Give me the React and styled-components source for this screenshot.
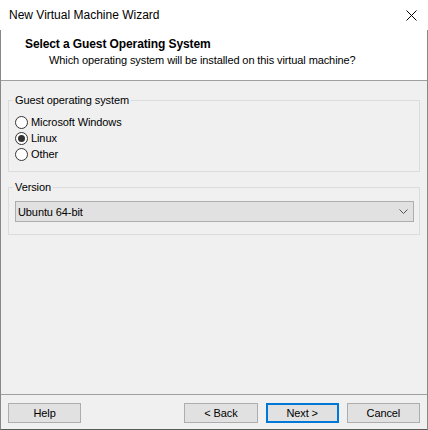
import React, { useState } from "react";
import styled, { createGlobalStyle } from "styled-components";

const GlobalStyle = createGlobalStyle`
  html, body {
    margin: 0;
    padding: 0;
    background: #ffffff;
  }
  body {
    font-family: "Liberation Sans", Arial, sans-serif;
    font-size: 11px;
    letter-spacing: -0.1px;
    color: #000000;
  }
`;

const Window = styled.div`
  width: 428px;
  height: 430px;
  display: flex;
  flex-direction: column;
  box-sizing: border-box;
  background: #f0f0f0;
`;

const TitleBar = styled.div`
  height: 30px;
  flex: none;
  display: flex;
  align-items: center;
  justify-content: space-between;
  background: #ffffff;
  padding: 0 11px 0 9px;
`;

const TitleText = styled.span`
  font-size: 12px;
  letter-spacing: 0;
  color: #000;
`;

const CloseBtn = styled.div`
  width: 12px;
  height: 12px;
  display: flex;
  align-items: center;
  justify-content: center;
`;

const Frame = styled.div`
  flex: 1;
  display: flex;
  flex-direction: column;
  border-left: 1px solid #888888;
  border-right: 1px solid #888888;
  border-bottom: 1px solid #5a5a5a;
`;

const Header = styled.div`
  height: 51px;
  flex: none;
  background: #ffffff;
  border-bottom: 1px solid #a0a0a0;
  padding: 6px 0 0 24px;
  box-sizing: border-box;
`;

const HeaderTitle = styled.div`
  font-size: 12px;
  font-weight: 700;
  line-height: 16px;
`;

const HeaderSub = styled.div`
  padding-left: 24px;
  line-height: 17px;
`;

const Body = styled.div`
  flex: 1;
  padding: 11px 7px 0;
  display: flex;
  flex-direction: column;
`;

const Group = styled.fieldset`
  margin: 0 0 ${(p) => p.$gap || 0}px;
  padding: 0;
  border: 1px solid #dcdcdc;
  min-width: 0;
`;

const Legend = styled.legend`
  padding: 0 2px;
  margin-left: 4px;
  line-height: 16px;
  color: #000;
`;

const GroupInner = styled.div`
  padding: ${(p) => p.$pad};
`;

const RadioRow = styled.label`
  display: flex;
  align-items: center;
  height: 16px;
  gap: 3px;
  cursor: default;
`;

const RadioDot = styled.span`
  width: 11px;
  height: 11px;
  border: 1px solid #333333;
  border-radius: 50%;
  background: #ffffff;
  display: flex;
  align-items: center;
  justify-content: center;
  flex: none;

  &::after {
    content: "";
    width: 7px;
    height: 7px;
    border-radius: 50%;
    background: ${(p) => (p.$on ? "#333333" : "transparent")};
  }
`;

const Select = styled.div`
  height: 21px;
  box-sizing: border-box;
  border: 1px solid #adadad;
  background: #e1e1e1;
  display: flex;
  align-items: center;
  justify-content: space-between;
  padding: 0 5px 0 2px;
`;

const Footer = styled.div`
  margin-top: auto;
  height: 35px;
  flex: none;
  border-top: 1px solid #a0a0a0;
  display: flex;
  align-items: flex-start;
  padding: 8px 7px 0;
  box-sizing: border-box;
`;

const Button = styled.button`
  width: 74px;
  height: 20px;
  box-sizing: border-box;
  font: inherit;
  letter-spacing: inherit;
  color: #000;
  background: #e1e1e1;
  border: ${(p) => (p.$primary ? "2px solid #0078d7" : "1px solid #adadad")};
  padding: 0;
  margin-left: ${(p) => p.$ml || 0}px;
  display: flex;
  align-items: center;
  justify-content: center;
  line-height: 16px;
`;

const options = ["Microsoft Windows", "Linux", "Other"];

export default function App() {
  const [os, setOs] = useState("Linux");

  return (
    <>
      <GlobalStyle />
      <Window>
        <TitleBar>
          <TitleText>New Virtual Machine Wizard</TitleText>
          <CloseBtn>
            <svg width="11" height="11" viewBox="0 0 11 11">
              <path d="M0.5 0.5 L10.5 10.5 M10.5 0.5 L0.5 10.5" stroke="#000" strokeWidth="1" />
            </svg>
          </CloseBtn>
        </TitleBar>
        <Frame>
          <Header>
            <HeaderTitle>Select a Guest Operating System</HeaderTitle>
            <HeaderSub>Which operating system will be installed on this virtual machine?</HeaderSub>
          </Header>
          <Body>
            <Group $gap={7}>
              <Legend>Guest operating system</Legend>
              <GroupInner $pad="6px 0 9px 6px">
                {options.map((o) => (
                  <RadioRow key={o} onClick={() => setOs(o)}>
                    <RadioDot $on={os === o} />
                    {o}
                  </RadioRow>
                ))}
              </GroupInner>
            </Group>
            <Group>
              <Legend>Version</Legend>
              <GroupInner $pad="6px 5px 12px 6px">
                <Select>
                  <span>Ubuntu 64-bit</span>
                  <svg width="9" height="5" viewBox="0 0 9 5">
                    <path d="M0.5 0.5 L4.5 4.5 L8.5 0.5" fill="none" stroke="#555" strokeWidth="1" />
                  </svg>
                </Select>
              </GroupInner>
            </Group>
          </Body>
          <Footer>
            <Button>Help</Button>
            <Button $ml={103}>&lt; Back</Button>
            <Button $ml={8} $primary>Next &gt;</Button>
            <Button $ml={8}>Cancel</Button>
          </Footer>
        </Frame>
      </Window>
    </>
  );
}
